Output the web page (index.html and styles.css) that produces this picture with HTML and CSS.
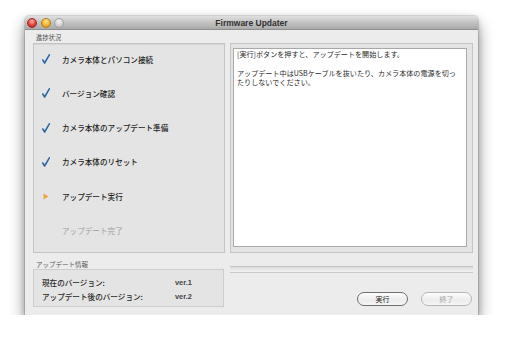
FILE: index.html
```html
<!DOCTYPE html>
<html lang="ja">
<head>
    <meta charset="UTF-8">
    <title>Firmware Updater</title>
    <link rel="stylesheet" href="styles.css">
</head>
<body>
    <div class="window">
        <div class="titlebar">
            <div class="lights">
                <span class="light red"></span>
                <span class="light yellow"></span>
                <span class="light off"></span>
            </div>
            <div class="title">Firmware Updater</div>
        </div>

        <div class="content">
            <div class="group-label">進捗状況</div>
            <div></div>

            <ul class="steps">
                <li class="done"><span class="mark"><svg width="8" height="10" viewBox="0 0 8 10"><path d="M0.8 6 L2.6 9 L7.4 0.8" fill="none" stroke="#2d67a6" stroke-width="1.6" stroke-linecap="round" stroke-linejoin="round"/></svg></span>カメラ本体とパソコン接続</li>
                <li class="done"><span class="mark"><svg width="8" height="10" viewBox="0 0 8 10"><path d="M0.8 6 L2.6 9 L7.4 0.8" fill="none" stroke="#2d67a6" stroke-width="1.6" stroke-linecap="round" stroke-linejoin="round"/></svg></span>バージョン確認</li>
                <li class="done"><span class="mark"><svg width="8" height="10" viewBox="0 0 8 10"><path d="M0.8 6 L2.6 9 L7.4 0.8" fill="none" stroke="#2d67a6" stroke-width="1.6" stroke-linecap="round" stroke-linejoin="round"/></svg></span>カメラ本体のアップデート準備</li>
                <li class="done"><span class="mark"><svg width="8" height="10" viewBox="0 0 8 10"><path d="M0.8 6 L2.6 9 L7.4 0.8" fill="none" stroke="#2d67a6" stroke-width="1.6" stroke-linecap="round" stroke-linejoin="round"/></svg></span>カメラ本体のリセット</li>
                <li class="current"><span class="mark"><svg width="6" height="7" viewBox="0 0 6 7"><path d="M0.5 0.5 L5.5 3.5 L0.5 6.5 Z" fill="#f2a443"/></svg></span>アップデート実行</li>
                <li class="todo"><span class="mark"></span>アップデート完了</li>
            </ul>

            <div class="message-box">
                <div class="message">
                    <p>[実行]ボタンを押すと、アップデートを開始します。</p>
                    <p>アップデート中はUSBケーブルを抜いたり、カメラ本体の電源を切っ<br>たりしないでください。</p>
                </div>
            </div>

            <div class="info">
                <div class="group-label">アップデート情報</div>
                <div class="info-box">
                    <div class="info-row"><span class="key">現在のバージョン:</span><span class="val">ver.1</span></div>
                    <div class="info-row"><span class="key">アップデート後のバージョン:</span><span class="val">ver.2</span></div>
                </div>
            </div>

            <div class="actions">
                <div class="progress"></div>
                <div class="buttons">
                    <button class="btn">実行</button>
                    <button class="btn" disabled>終了</button>
                </div>
            </div>
        </div>
    </div>
</body>
</html>
```

FILE: styles.css
```css
body {
    margin: 0;
    background: #fff;
    font-family: "Noto Sans CJK JP", "Liberation Sans", sans-serif;
    color: #222;
}
.window {
    margin: 16px 0 0 25px;
    width: 453px;
    height: 299px;
    background: #ececec;
    border-radius: 4px 4px 0 0;
    box-shadow: 0 0 0 1px rgba(0, 0, 0, 0.1), 0 9px 16px rgba(0, 0, 0, 0.45), 0 2px 6px rgba(0, 0, 0, 0.2);
}
.titlebar {
    position: relative;
    height: 13px;
    border-bottom: 1px solid #8e8e8e;
    border-radius: 4px 4px 0 0;
    background: linear-gradient(#e0e0e0, #c2c2c2 50%, #aaaaaa);
}
.lights {
    display: flex;
    gap: 3.5px;
    padding: 2px 0 0 2px;
}
.light {
    width: 10px;
    height: 10px;
    border-radius: 50%;
    box-sizing: border-box;
}
.red {
    background: radial-gradient(circle at 50% 30%, #ffb0a8, #e0403a 55%, #b3221e);
    border: 1px solid #9c2a26;
}
.yellow {
    background: radial-gradient(circle at 50% 30%, #ffe8a0, #f2b32c 55%, #c98a10);
    border: 1px solid #b07c1c;
}
.off {
    background: radial-gradient(circle at 50% 30%, #f4f4f4, #cfcfcf 60%, #b5b5b5);
    border: 1px solid #a2a2a2;
}
.title {
    position: absolute;
    top: 0;
    left: 0;
    right: 0;
    text-align: center;
    font-family: "Liberation Sans", sans-serif;
    font-weight: bold;
    font-size: 8.5px;
    line-height: 14px;
    color: #333;
}
.content {
    display: grid;
    grid-template-columns: 192px 243px;
    grid-template-rows: 13px 210px auto;
    column-gap: 5px;
    padding: 0 5px 0 8px;
}
.group-label {
    font-size: 6.3px;
    line-height: 8px;
    color: #555;
    padding: 4px 0 0 3px;
}
.steps {
    list-style: none;
    margin: 0;
    padding: 8px 0 0 8px;
    display: flex;
    flex-direction: column;
    gap: 20.3px;
    background: #e4e4e4;
    border: 1px solid #c4c4c4;
    box-shadow: inset 0 1px 0 #d6d6d6;
}
.steps li {
    display: flex;
    align-items: center;
    height: 14px;
    font-size: 7.6px;
    font-weight: 500;
    color: #1e1e1e;
}
.steps li.todo {
    color: #a0a0a0;
    font-weight: normal;
}
.mark {
    width: 20px;
    display: flex;
    align-items: center;
}
.current .mark {
    padding-left: 1px;
    width: 19px;
}
.message-box {
    background: #e4e4e4;
    border: 1px solid #c4c4c4;
    padding: 4px 5px 5px 2px;
    display: flex;
}
.message {
    flex: 1;
    background: #fff;
    border: 1px solid #a8a8a8;
    padding: 1px 2px 0 3px;
    font-size: 7.1px;
    line-height: 9px;
    color: #2a2a2a;
    white-space: nowrap;
    overflow: hidden;
}
.message p {
    margin: 0 0 10px;
}
.info .group-label {
    padding: 7px 0 0 3px;
    font-size: 6.5px;
}
.info-box {
    margin-top: 1px;
    width: 191px;
    height: 38px;
    box-sizing: border-box;
    background: #e4e4e4;
    border: 1px solid #cdcdcd;
    padding: 6px 0 0 8px;
}
.info-row {
    display: flex;
    font-size: 7.6px;
    font-weight: 500;
    line-height: 14px;
    color: #2a2a2a;
}
.key {
    width: 133px;
}
.val {
    font-family: "Liberation Sans", sans-serif;
    font-weight: bold;
    font-size: 7.4px;
    color: #444;
}
.progress {
    margin-top: 13px;
    height: 7px;
    box-sizing: border-box;
    border-top: 1px solid #c2c2c2;
    border-bottom: 1px solid #cacaca;
    background: linear-gradient(#dcdcdc, #f2f2f2);
}
.buttons {
    display: flex;
    justify-content: flex-end;
    gap: 13px;
    margin-top: 19px;
    padding-right: 1px;
}
.btn {
    width: 51px;
    height: 14px;
    padding: 0;
    border: 1px solid #6e6e6e;
    border-radius: 7px;
    background: linear-gradient(#fdfdfd, #ececec 60%, #f6f6f6);
    font-family: "Noto Sans CJK JP", sans-serif;
    font-size: 7px;
    line-height: 12px;
    color: #222;
}
.btn:disabled {
    border-color: #b6b6b6;
    color: #a8a8a8;
}
```
